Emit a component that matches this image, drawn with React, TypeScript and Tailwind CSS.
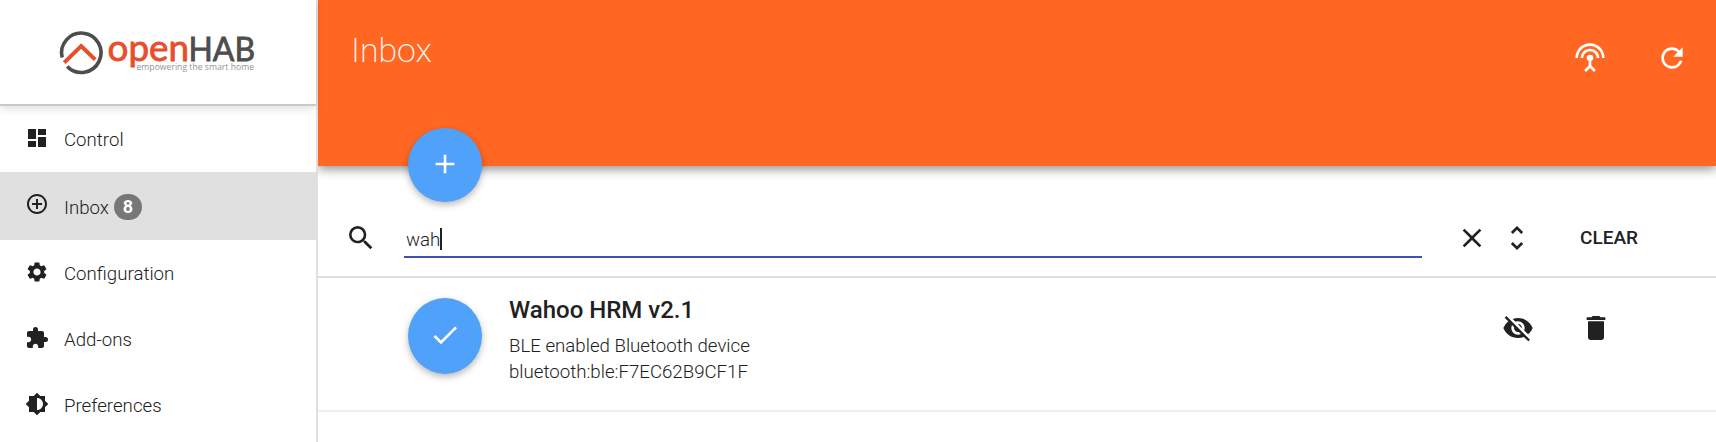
import React from "react";
import {
  MdAdd,
  MdBrightness6,
  MdCheck,
  MdClose,
  MdControlPoint,
  MdDashboard,
  MdDelete,
  MdExtension,
  MdRefresh,
  MdSearch,
  MdSettings,
  MdSettingsInputAntenna,
  MdUnfoldMore,
  MdVisibilityOff,
} from "react-icons/md";
import type { IconType } from "react-icons";

type NavItem = { label: string; icon: IconType; count?: number };

const items: NavItem[] = [
  { label: "Control", icon: MdDashboard },
  { label: "Inbox", icon: MdControlPoint, count: 8 },
  { label: "Configuration", icon: MdSettings },
  { label: "Add-ons", icon: MdExtension },
  { label: "Preferences", icon: MdBrightness6 },
];

function Logo() {
  return (
    <svg width="200" height="50" viewBox="0 0 200 50" className="block overflow-visible">
      <path d="M2.2 28.5A19.7 19.7 0 1 1 7.2 37.5" fill="none" stroke="#4d4d4d" strokeWidth="3.6" />
      <path d="M4.2 33.6L21.2 17L35.2 30.6" fill="none" stroke="#e84e2c" strokeWidth="4" />
      <g className="font-['Lato',sans-serif] font-normal" strokeWidth="0.8">
        <text x="47.5" y="31.8" fontSize="37" fill="#e84e2c" stroke="#e84e2c" textLength="81.5" lengthAdjust="spacingAndGlyphs">
          open
        </text>
        <text x="128.5" y="31.8" fontSize="33" fill="#4d4d4d" stroke="#4d4d4d" textLength="66.5" lengthAdjust="spacingAndGlyphs">
          HAB
        </text>
      </g>
      <text x="76.5" y="41" className="font-['Open_Sans',sans-serif]" fontSize="9.5" fill="#949494" textLength="117.5" lengthAdjust="spacingAndGlyphs">
        empowering the smart home
      </text>
    </svg>
  );
}

function Sidebar() {
  return (
    <aside className="relative z-10 flex w-[318px] shrink-0 flex-col border-r-2 border-[#e0e0e0] bg-white">
      <div className="flex h-[106px] shrink-0 border-b-2 border-[#c9c9c9] pl-[60px] pt-[29px] shadow-[0_3px_8px_rgba(0,0,0,0.12)]">
        <Logo />
      </div>
      <nav className="flex grow flex-col">
        {items.map(({ label, icon: Icon, count }) => (
          <a
            key={label}
            className={
              count
                ? "flex h-[68px] shrink-0 items-center bg-[#e0e0e0] pl-[25px]"
                : "flex h-[66px] shrink-0 items-center pl-[25px]"
            }
          >
            <Icon className={count ? "mb-1 size-6" : "mb-0.5 size-6"} />
            <span
              className={
                count
                  ? "ml-[15px] pt-1 text-[18.67px] font-light leading-6"
                  : "ml-[15px] pt-0.5 text-[18.67px] font-light leading-6"
              }
            >
              {label}
            </span>
            {count && (
              <span className="ml-[5px] mt-0.5 flex h-[26px] w-7 items-center justify-center rounded-[13px] bg-[#777] pb-px text-[18px] font-bold text-white">
                {count}
              </span>
            )}
          </a>
        ))}
      </nav>
    </aside>
  );
}

export default function App() {
  return (
    <div className="flex h-[442px] w-[1716px] overflow-hidden bg-white font-['Roboto',sans-serif] text-[#212121]">
      <Sidebar />
      <main className="flex grow flex-col">
        <header className="flex h-[166px] shrink-0 bg-[#ff6722] text-white shadow-[0_3px_10px_rgba(0,0,0,0.45)]">
          <h1 className="ml-[33px] mt-[29px] text-[33.8px] font-extralight leading-[44px]">Inbox</h1>
          <div className="ml-auto mr-7 mt-[42px] flex gap-[50px]">
            <MdSettingsInputAntenna className="size-8" />
            <MdRefresh className="size-8" />
          </div>
        </header>
        <button className="relative -mb-9 -mt-[38px] ml-[90px] flex size-[74px] shrink-0 items-center justify-center rounded-full bg-[#50a1f9] text-white shadow-[0_3px_7px_rgba(0,0,0,0.28)]">
          <MdAdd className="mb-0.5 size-8" />
        </button>
        <div className="flex h-[112px] shrink-0 items-start border-b-2 border-[#e0e0e0] pt-[56px]">
          <MdSearch className="ml-[27px] size-8" />
          <div className="-mt-0.5 ml-[27px] flex h-[38px] w-[1018px] items-center border-b-2 border-[#3f51b5] pl-0.5 text-[18.67px] font-light">
            <span className="pt-[3px]">wah</span>
            <span className="mt-0.5 h-[22px] w-0.5 bg-[#212121]" />
          </div>
          <MdClose className="ml-[34px] size-8" />
          <MdUnfoldMore className="ml-[13px] size-8" />
          <button className="ml-[47px] text-[19px] font-medium leading-8">CLEAR</button>
        </div>
        <div className="flex h-[134px] shrink-0 items-start border-b-2 border-[#eee]">
          <span className="ml-[90px] mt-5 flex h-[76px] w-[74px] items-center justify-center rounded-[50%] bg-[#50a1f9] text-white shadow-[0_3px_7px_rgba(0,0,0,0.28)]">
            <MdCheck className="mb-0.5 size-8" />
          </span>
          <div className="ml-[27px] mt-[18px]">
            <h2 className="text-[24px] font-medium leading-7">Wahoo HRM v2.1</h2>
            <p className="mt-[9px] text-[18.67px] font-light leading-[26px]">BLE enabled Bluetooth device</p>
            <p className="text-[18.67px] font-light leading-[26px]">bluetooth:ble:F7EC62B9CF1F</p>
          </div>
          <div className="ml-auto mr-[104px] mt-[34px] flex gap-[46px]">
            <MdVisibilityOff className="size-8" />
            <MdDelete className="size-8" />
          </div>
        </div>
      </main>
    </div>
  );
}
